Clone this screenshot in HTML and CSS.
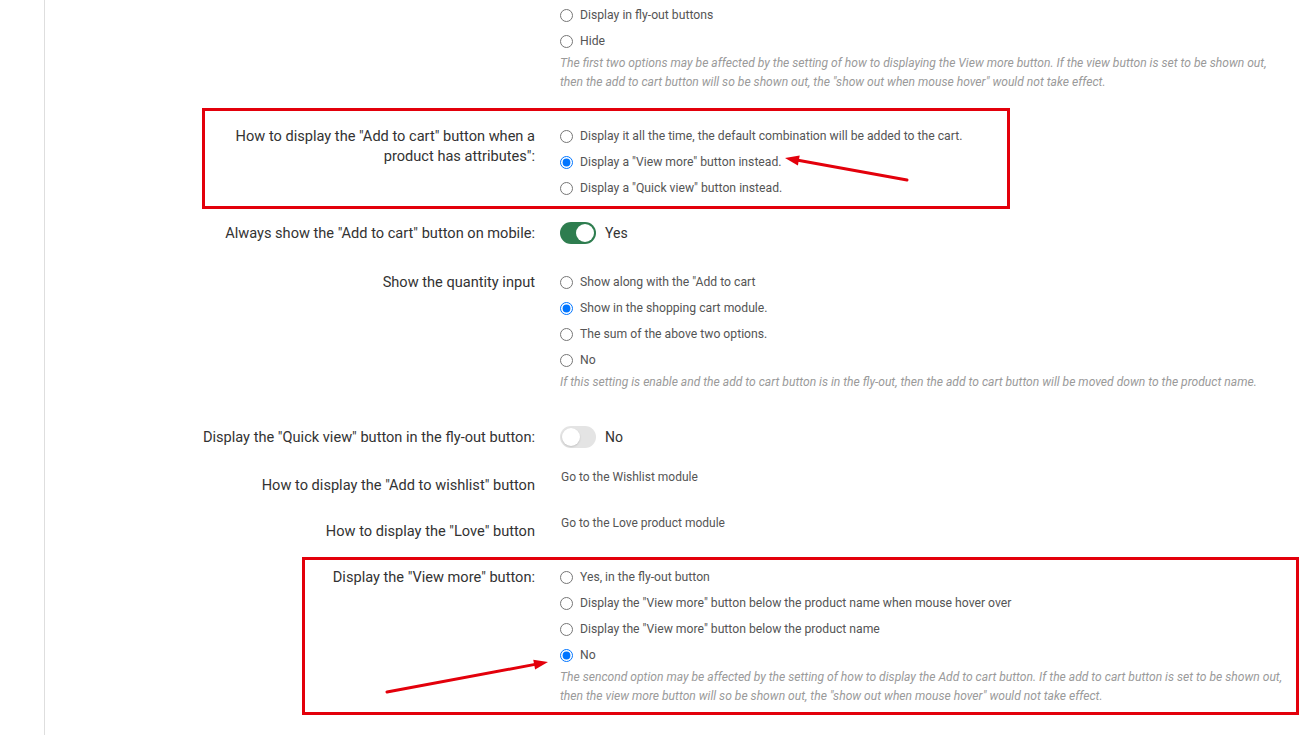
FILE: index.html
```html
<!DOCTYPE html>
<html lang="en">
<head>
    <meta charset="UTF-8">
    <meta name="viewport" content="width=device-width, initial-scale=1.0">
    <title>Product list settings</title>
    <link rel="stylesheet" href="styles.css">
</head>
<body>
    <div class="page">
        <!-- Settings form -->
        <div class="settings">
            <div class="row row--help">
                <div class="label"></div>
                <div class="field">
                    <label class="option"><input type="radio" name="viewmore_top"> Display in fly-out buttons</label>
                    <label class="option"><input type="radio" name="viewmore_top"> Hide</label>
                    <p class="help">The first two options may be affected by the setting of how to displaying the View more button. If the view button is set to be shown out,<br>then the add to cart button will so be shown out, the "show out when mouse hover" would not take effect.</p>
                </div>
            </div>

            <div class="row">
                <div class="label">How to display the "Add to cart" button when a<br>product has attributes":</div>
                <div class="field">
                    <label class="option"><input type="radio" name="addcart"> Display it all the time, the default combination will be added to the cart.</label>
                    <label class="option"><input type="radio" name="addcart" checked> Display a "View more" button instead.</label>
                    <label class="option"><input type="radio" name="addcart"> Display a "Quick view" button instead.</label>
                </div>
            </div>

            <div class="row row--wide">
                <div class="label">Always show the "Add to cart" button on mobile:</div>
                <div class="field field--toggle">
                    <span class="switch switch--on"></span>
                    <span class="switch-text">Yes</span>
                </div>
            </div>

            <div class="row row--help row--split">
                <div class="label">Show the quantity input</div>
                <div class="field">
                    <label class="option"><input type="radio" name="qty"> Show along with the "Add to cart</label>
                    <label class="option"><input type="radio" name="qty" checked> Show in the shopping cart module.</label>
                    <label class="option"><input type="radio" name="qty"> The sum of the above two options.</label>
                    <label class="option"><input type="radio" name="qty"> No</label>
                    <p class="help">If this setting is enable and the add to cart button is in the fly-out, then the add to cart button will be moved down to the product name.</p>
                </div>
            </div>

            <div class="row row--tight">
                <div class="label">Display the "Quick view" button in the fly-out button:</div>
                <div class="field field--toggle">
                    <span class="switch"></span>
                    <span class="switch-text">No</span>
                </div>
            </div>

            <div class="row row--snug">
                <div class="label label--low">How to display the "Add to wishlist" button</div>
                <div class="field">
                    <div class="value">Go to the Wishlist module</div>
                </div>
            </div>

            <div class="row row--wide">
                <div class="label label--low">How to display the "Love" button</div>
                <div class="field">
                    <div class="value">Go to the Love product module</div>
                </div>
            </div>

            <div class="row">
                <div class="label">Display the "View more" button:</div>
                <div class="field">
                    <label class="option"><input type="radio" name="viewmore"> Yes, in the fly-out button</label>
                    <label class="option"><input type="radio" name="viewmore"> Display the "View more" button below the product name when mouse hover over</label>
                    <label class="option"><input type="radio" name="viewmore"> Display the "View more" button below the product name</label>
                    <label class="option"><input type="radio" name="viewmore" checked> No</label>
                    <p class="help">The sencond option may be affected by the setting of how to display the Add to cart button. If the add to cart button is set to be shown out,<br>then the view more button will so be shown out, the "show out when mouse hover" would not take effect.</p>
                </div>
            </div>
        </div>

        <!-- Marcações em vermelho por cima da tela -->
        <svg class="annotations" width="1314" height="735" viewBox="0 0 1314 735">
            <rect x="203.5" y="109.5" width="805" height="98" fill="none" stroke="#e3000b" stroke-width="3"/>
            <rect x="303.5" y="558.5" width="994" height="155" fill="none" stroke="#e3000b" stroke-width="3"/>
            <line x1="907" y1="180" x2="798" y2="160.3" stroke="#e3000b" stroke-width="3" stroke-linecap="round"/>
            <polygon points="785,158 797.9,165.4 799.7,155.6" fill="#e3000b"/>
            <line x1="387" y1="692" x2="535" y2="664.4" stroke="#e3000b" stroke-width="3" stroke-linecap="round"/>
            <polygon points="548,662 535.1,669.5 533.3,659.7" fill="#e3000b"/>
        </svg>
    </div>
</body>
</html>
```

FILE: styles.css
```css
* {
    margin: 0;
    padding: 0;
    box-sizing: border-box;
}

body {
    font-family: Roboto, 'Liberation Sans', sans-serif;
    background: #fff;
    color: #333;
    overflow: hidden;
}

.page {
    position: relative;
    width: 1314px;
    height: 735px;
}

/* Coluna do formulário */
.settings {
    margin-left: 44px;
    border-left: 1px solid #dedede;
    height: 100%;
    padding-top: 2px;
}

.row {
    display: grid;
    grid-template-columns: 490px 1fr;
    column-gap: 25px;
    margin-bottom: 19px;
}

.row--help {
    margin-bottom: 31px;
}

.row--split {
    margin-bottom: 32px;
}

.row--tight {
    margin-bottom: 17px;
}

.row--snug {
    margin-bottom: 18px;
}

.row--wide {
    margin-bottom: 23px;
}

.label {
    text-align: right;
    font-size: 14.6px;
    line-height: 20px;
    color: #333;
    padding-top: 3px;
}

.label--low {
    padding-top: 8px;
}

.field {
    display: flex;
    flex-direction: column;
}

.option {
    display: flex;
    align-items: center;
    gap: 7px;
    height: 26px;
    font-size: 12.2px;
    color: #555;
    cursor: pointer;
}

.option input {
    width: 13px;
    height: 13px;
    margin: 0;
    flex-shrink: 0;
}

.help {
    font-size: 12.1px;
    line-height: 19px;
    font-style: italic;
    color: #9a9a9a;
}

.value {
    font-size: 12px;
    line-height: 20px;
    color: #555;
    padding-left: 1px;
}

/* Interruptor sim/não */
.field--toggle {
    flex-direction: row;
    align-items: center;
    gap: 9px;
    height: 26px;
}

.switch {
    position: relative;
    width: 36px;
    height: 22px;
    border-radius: 11px;
    background: #e4e4e4;
}

.switch::after {
    content: '';
    position: absolute;
    top: 2px;
    left: 2px;
    width: 18px;
    height: 18px;
    border-radius: 50%;
    background: #fff;
    box-shadow: 0 1px 2px rgba(0, 0, 0, 0.15);
}

.switch--on {
    background: #2e7d4f;
}

.switch--on::after {
    left: 16px;
    box-shadow: none;
}

.switch-text {
    font-size: 14px;
    color: #333;
}

/* Camada das anotações */
.annotations {
    position: absolute;
    top: 0;
    left: 0;
    pointer-events: none;
}
```
